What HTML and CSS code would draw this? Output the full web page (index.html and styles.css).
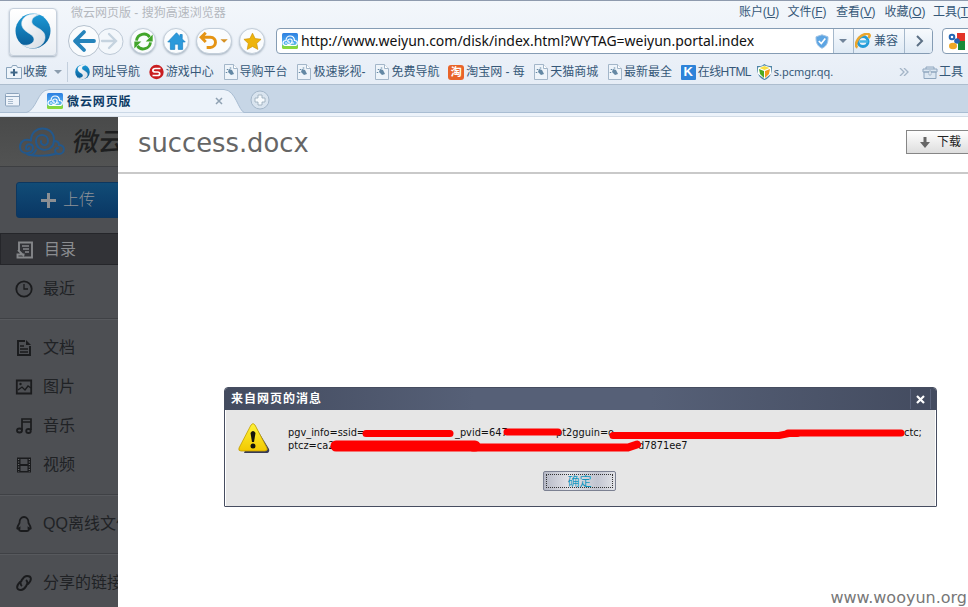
FILE: index.html
```html
<!DOCTYPE html>
<html lang="zh-CN">
<head>
<meta charset="utf-8">
<title>微云网页版</title>
<link rel="stylesheet" href="styles.css">
</head>
<body>
<svg class="defs" aria-hidden="true">
  <defs>
    <linearGradient id="blue" x1="0" y1="0" x2="0" y2="1"><stop offset="0" stop-color="#1c9bd8"/><stop offset="1" stop-color="#095a94"/></linearGradient>
    <linearGradient id="silver" x1="0" y1="0" x2="1" y2="1"><stop offset="0" stop-color="#fff"/><stop offset="1" stop-color="#d5dce4"/></linearGradient>
    <linearGradient id="warn" x1="0" y1="0" x2="0" y2="1"><stop offset="0" stop-color="#fff43a"/><stop offset="1" stop-color="#f2c800"/></linearGradient>
    <linearGradient id="sky" x1="0" y1="0" x2="0" y2="1"><stop offset="0" stop-color="#2d7fe0"/><stop offset=".7" stop-color="#58b5f3"/><stop offset=".8" stop-color="#7bd24c"/><stop offset="1" stop-color="#8ddb35"/></linearGradient>
    <symbol id="sogou" viewBox="0 0 36 36">
      <circle cx="18" cy="18" r="17.500" fill="url(#blue)"/>
      <path d="M25 1.500C13-1 5 5 7 13c2 7 13 8 12 14-1 4-6 6-12 5 9 6 22 3 23-7 1-9-11-10-13-15-1-5 3-7 8-8.500z" fill="url(#silver)" stroke="#d9e5ee" stroke-width=".6"/>
    </symbol>
    <symbol id="file" viewBox="0 0 15 16">
      <path d="M1.500.5h9l4 4v11h-13z" fill="#eef4fa" stroke="#a3b6c9"/><path d="M10.500 .5v4h4" fill="#fff" stroke="#a3b6c9"/>
      <path d="M6 5l3 1 2 4-3 1-3-3z" fill="#6488a4"/><path d="M4.500 5v1M7.500 3.500v1M3.500 8v1" stroke="#6488a4" stroke-width="1.500"/>
    </symbol>
    <symbol id="cloud" viewBox="0 0 46 30">
      <g fill="none" stroke="currentColor" stroke-linecap="round">
        <path d="M12 13.500C12 -2.500 35 -2.500 35 13c0 13-18 13-18 1 0-8 12-8 12 0 0 6-8 5-7 0"/>
        <path d="M12 13.500C4 11 1 16 1 20c0 8 13 8 13 1 0-5-7-5-7 0 0 2 3 2 3 0"/>
        <path d="M35 14c4 0 5 2 5 4 7 0 6 9 0 9-5 0-5-6-1-6"/>
        <path d="M8 27c4 3 8-1 9-4M11 28c5 1 18 1 25-1"/>
      </g>
    </symbol>
    <symbol id="weiyun" viewBox="0 0 16 16">
      <rect width="16" height="16" rx="1.500" fill="url(#sky)"/>
      <g fill="none" stroke="#fff" stroke-width="1.200"><path d="M4 12.500c-4 0-4-5 0-5 0-6 8-6 8.500 0 4 0 3.500 5 0 5z"/><path d="M5 11c5 2 7-5 3-5-3 0-3 4 0 3M12 10h-2M3 10h2"/></g>
    </symbol>
  </defs>
</svg>

<header class="chrome">
  <div class="top">
    <div class="brand"><svg><use href="#sogou"/></svg></div>
    <div class="bars">
      <div class="titlebar">
        <span class="wintitle">微云网页版 - 搜狗高速浏览器</span>
        <nav class="menu"><span>账户(<u>U</u>)</span><span>文件(<u>F</u>)</span><span>查看(<u>V</u>)</span><span>收藏(<u>O</u>)</span><span>工具(<u>T</u></span></nav>
      </div>
      <div class="toolbar">
        <svg class="backfwd" viewBox="0 0 58 34">
          <circle cx="43" cy="17.500" r="13" fill="#f3f7fb" stroke="#bdc9d6"/>
          <circle cx="17" cy="17" r="15.500" fill="#f9fbfd" stroke="#b5c1ce"/>
          <path d="M17 8l-9 9 9 9M9 17h18" fill="none" stroke="#2583bb" stroke-width="3.800" stroke-linecap="round" stroke-linejoin="round"/>
          <path d="M42 10l7 7-7 7M48 17H35" fill="none" stroke="#c5d3df" stroke-width="2.300" stroke-linecap="round"/>
        </svg>
        <div class="round"><svg viewBox="0 0 24 24"><path d="M4 11c1-8 11-10 15-4M20 13c-1 8-11 10-15 4" fill="none" stroke="#42a52b" stroke-width="3.200"/><path d="M22.500 4v8h-8zM1.500 20v-8h8z" fill="#42a52b"/></svg></div>
        <div class="round"><svg viewBox="0 0 24 24"><path d="M12 2L2 12.500h3V21h5v-6h4v6h5v-8.500h3L18.500 9V4H16v2.500z" fill="#2c9adb" stroke="#1780c3" stroke-width=".8"/></svg></div>
        <div class="round undo"><svg viewBox="0 0 34 24"><path d="M8 3L3 8l5 5M4 8h9c8 0 7 11 0 11H9" fill="none" stroke="#e59414" stroke-width="3.200"/><path d="M24 10h8l-4 4z" fill="#d59022"/></svg></div>
        <div class="round"><svg viewBox="0 0 24 24"><path d="M12 2.500l3 6.200 6.800.8-5 4.700 1.300 6.800-6.100-3.300L6 21l1.200-6.800-5-4.700 6.800-.8z" fill="#eeb40b" stroke="#cf9308" stroke-width=".8"/></svg></div>
        <div class="address">
          <svg class="favicon"><use href="#weiyun"/></svg>
          <span class="url">http://www.weiyun.com/disk/index.html?WYTAG=weiyun.portal.index</span>
          <svg class="shield" viewBox="0 0 14 15"><path d="M7 .8l6 2c.3 6-1.500 9.500-6 11.500C2.500 12.300.7 8.800 1 2.800z" fill="#5da5e3" stroke="#a3c5e5"/><path d="M3.800 7l2.500 2.500 4-5" fill="none" stroke="#fff" stroke-width="1.700"/></svg>
          <div class="cell drop"><i></i></div>
          <div class="cell compat"><svg viewBox="0 0 16 16"><circle cx="8" cy="8.500" r="5" fill="none" stroke="#239bd7" stroke-width="3"/><path d="M5 8.500h8" stroke="#46b5e4" stroke-width="2.500"/><path d="M2.500 14.500C-1 13 2 4 9 1.500 14-.3 16 2 13.500 5" fill="none" stroke="#eaa62d" stroke-width="2.600"/></svg><span>兼容</span></div>
          <div class="cell go"><svg viewBox="0 0 10 12"><path d="M2 1l5 5-5 5" fill="none" stroke="#5c7085" stroke-width="2"/></svg></div>
        </div>
        <div class="search"><svg viewBox="0 0 17 17"><rect width="17" height="17" rx="2" fill="#fff"/><path d="M9 0h8v8H9z" fill="#e33428"/><path d="M10 8h7v9h-7z" fill="#198b3a"/><circle cx="4" cy="4" r="2.300" fill="none" stroke="#2465b3" stroke-width="2"/><circle cx="9" cy="8" r="2.800" fill="#2465b3"/><ellipse cx="5" cy="13" rx="4" ry="3.300" fill="#eda826"/></svg></div>
      </div>
    </div>
  </div>
  <div class="bookmarks">
    <div class="fav"><svg viewBox="0 0 16 14"><path d="M.5 2.500h5l1-2h4l1 2h4v11H.5z" fill="#eef4fa" stroke="#8ba4bc"/><path d="M8 4v7M4.500 7.500h7" stroke="#3f6687" stroke-width="2"/></svg><span>收藏</span><i></i></div>
    <div class="marks">
      <div class="bm"><svg><use href="#sogou"/></svg><span>网址导航</span></div>
      <div class="bm"><svg viewBox="0 0 15 15"><circle cx="7.500" cy="7.500" r="7.200" fill="#c91d20"/><path d="M11.500 4H6.500C3 4 3 7.500 6.500 7.500h2c3 0 3 3.500 0 3.500H3.500" fill="none" stroke="#fff" stroke-width="1.700"/></svg><span>游戏中心</span></div>
      <div class="bm"><svg><use href="#file"/></svg><span>导购平台</span></div>
      <div class="bm"><svg><use href="#file"/></svg><span>极速影视-</span></div>
      <div class="bm"><svg><use href="#file"/></svg><span>免费导航</span></div>
      <div class="bm"><b class="tao">淘</b><span>淘宝网 - 每</span></div>
      <div class="bm"><svg><use href="#file"/></svg><span>天猫商城</span></div>
      <div class="bm"><svg><use href="#file"/></svg><span>最新最全</span></div>
      <div class="bm"><b class="k">K</b><span>在线HTML</span></div>
      <div class="bm"><svg viewBox="0 0 15 16"><path d="M7.500 0C10 2 12 2 15 2c0 8-2 12-7.500 14C2 14 0 10 0 2c3 0 5 0 7.500-2z" fill="#4b83a5"/><path d="M7.500 1.500L14 3.500V10l-6.500 5L1 10V3.500z" fill="#fff"/><path d="M2 5l5 2v7L3 10z" fill="#4ca920"/><path d="M13 5L8 7v7l4-4z" fill="#f19a1c"/><path d="M2.500 4l5-2 5 2-5 2z" fill="#f9df41"/></svg><span>s.pcmgr.qq.</span></div>
    </div>
    <div class="tools"><svg class="more" viewBox="0 0 10 8"><path d="M1 0l4 4-4 4M5 0l4 4-4 4" fill="none" stroke="#a4b5c7" stroke-width="1.300"/></svg><svg class="box" viewBox="0 0 16 13"><path d="M4 3V1h8v2M1 3h14v3H1zM2 6h12v6.500H2z" fill="#dce7f2" stroke="#8fa6be"/><path d="M7 5h2v4H7z" fill="#fff" stroke="#8fa6be" stroke-width=".7"/></svg><span>工具</span></div>
  </div>
</header>

<div class="tabs">
  <svg class="sidebtn" viewBox="0 0 16 14"><rect x=".5" y=".5" width="14" height="12.500" rx="1" fill="#edf3fa" stroke="#8ca3bc"/><path d="M1 3.500h13" stroke="#8ca3bc"/><path d="M3 6.500h5M3 8.500h5M3 10.500h5" stroke="#a8bacd"/></svg>
  <div class="tab">
    <svg class="tabshape" viewBox="0 0 220 24" preserveAspectRatio="none"><path d="M0 24C12 22 12 1 24 .5h175C211 1 213 22 220 24z" fill="#edf3fa" stroke="#a9bdd2"/></svg>
    <div class="tabbody"><svg><use href="#weiyun"/></svg><b>微云网页版</b><svg class="x" viewBox="0 0 8 8"><path d="M1 1l6 6M7 1L1 7" stroke="#8fa1b2" stroke-width="1.500"/></svg></div>
  </div>
  <svg class="plus" viewBox="0 0 20 20"><circle cx="10" cy="10" r="9" fill="#d9e4ef" stroke="#a4b7ca"/><path d="M8 5h4v3h3v4h-3v3H8v-3H5V8h3z" fill="#f6fafd" stroke="#98a8b8" stroke-width=".8"/></svg>
</div>

<main class="page">
  <aside class="side">
    <div class="logo"><svg><use href="#cloud"/></svg><span>微云</span></div>
    <div class="upload"><svg viewBox="0 0 15 15"><path d="M7.500 0v15M0 7.500h15" stroke="#8c8f93" stroke-width="3"/></svg><span>上传</span></div>
    <ul class="nav first">
      <li class="on"><svg viewBox="0 0 18 18"><path d="M3 10V1.500h13v15H1.500v-3h7M2 9l6 6" fill="none" stroke="#85878a" stroke-width="1.900"/><path d="M6 5h7M7 8h6M9 11h4" stroke="#85878a" stroke-width="1.500"/></svg><span>目录</span></li>
      <li><svg viewBox="0 0 18 18"><circle cx="9" cy="9" r="7.700" fill="none" stroke="#1a1b1d" stroke-width="1.800"/><path d="M9 4v5h4" fill="none" stroke="#1a1b1d" stroke-width="1.300"/></svg><span>最近</span></li>
    </ul>
    <ul class="nav media">
      <li><svg viewBox="0 0 18 18"><path d="M10 2H3v14h12V7" fill="none" stroke="#1a1b1d" stroke-width="1.900"/><path d="M11 1l5 5h-5z" fill="#1a1b1d"/><path d="M5 7h4M5 10h8M5 13h8" stroke="#1a1b1d" stroke-width="1.300"/></svg><span>文档</span></li>
      <li><svg viewBox="0 0 18 18"><path d="M1.800 2.500h14.400v13H1.800z" fill="none" stroke="#1a1b1d" stroke-width="1.800"/><path d="M3 12l4-3 3 3 3-4 3 2" fill="none" stroke="#1a1b1d" stroke-width="1.300"/><circle cx="5.500" cy="6" r="1.200" fill="#1a1b1d"/></svg><span>图片</span></li>
      <li><svg viewBox="0 0 18 18"><path d="M7 13V2h9v11M7 5h9" fill="none" stroke="#1a1b1d" stroke-width="1.700"/><ellipse cx="4.500" cy="13.500" rx="2.500" ry="2" fill="none" stroke="#1a1b1d" stroke-width="1.800"/><ellipse cx="13.500" cy="14" rx="2.300" ry="2" fill="none" stroke="#1a1b1d" stroke-width="1.800"/></svg><span>音乐</span></li>
      <li><svg viewBox="0 0 18 18"><path d="M2 1.500h14v15H2z" fill="#1a1b1d"/><path d="M5.500 3h7v5h-7zM5.500 10h7v5h-7z" fill="#4d4f53"/><path d="M3.700 3v13M14.300 3v13" stroke="#77797c" stroke-dasharray="1 1.500"/></svg><span>视频</span></li>
    </ul>
    <ul class="nav tall">
      <li><svg viewBox="0 0 18 18"><path d="M4.500 8C4 0 14 0 13.500 8c3 5 3 7 0 5 0 2 1 3-1.500 3H6c-2.500 0-1.500-1-1.500-3-3 2-3 0 0-5z" fill="none" stroke="#1a1b1d" stroke-width="1.800"/></svg><span>QQ离线文件</span></li>
    </ul>
    <ul class="nav tall">
      <li><svg viewBox="0 0 18 18"><path d="M7 12C3 9 9 2 12 2c5 0 5 4 1 8l-2 1M11 6c4 3-2 10-5 10-5 0-5-4-1-8l2-1" fill="none" stroke="#1a1b1d" stroke-width="1.900"/></svg><span>分享的链接</span></li>
    </ul>
  </aside>
  <section class="preview">
    <div class="dochead"><h1>success.docx</h1><div class="download"><svg viewBox="0 0 10 11"><path d="M3.500 0h3v5H10l-5 6-5-6h3.500z" fill="#666"/></svg><span>下载</span></div></div>
    <div class="docbody"></div>
    <div class="watermark">www.wooyun.org</div>
  </section>
  <div class="dialog">
    <div class="dtitle"><b>来自网页的消息</b><span class="close"><svg viewBox="0 0 9 9"><path d="M1 1l7 7M8 1L1 8" stroke="#fff" stroke-width="2.200"/></svg></span></div>
    <div class="dbody">
      <svg class="warning" viewBox="0 0 32 32"><path d="M17 4L31 27q1 4-3 4H6z" fill="#363a56"/><path d="M13 3q2-3 4 0l12 23q1 3-2 3H3q-3 0-2-3z" fill="url(#warn)" stroke="#c19d00" stroke-width=".8"/><path d="M12.500 11q2.500-4 5 0L16 20h-2z" fill="#14130c"/><circle cx="15" cy="24" r="2.500" fill="#14130c"/></svg>
      <div class="message">
        <p><span class="s1">pgv_info=ssid=</span><span class="s2">_pvid=647</span><span class="s3">pt2gguin=o</span><span class="s4">ctc;</span></p>
        <p><span class="s1">ptcz=ca2</span><span class="s5">d7871ee7</span></p>
        <svg class="strokes" viewBox="0 0 650 40"><g fill="none" stroke="#f00" stroke-linecap="round" stroke-linejoin="round"><path d="M78 13.500h84" stroke-width="7"/><path d="M219 12h51" stroke-width="7"/><path d="M325 15.500h166l10-2h8" stroke-width="7"/><path d="M500 13h113" stroke-width="7"/><path d="M48 26h139" stroke-width="11"/><path d="M185 27.500h155l9-3" stroke-width="8"/></g></svg>
      </div>
    </div>
    <div class="dfoot"><span class="ok">确定</span></div>
  </div>
</main>
</body>
</html>
```
FILE: styles.css
```css
* { box-sizing: border-box; }
body { margin: 0; width: 968px; height: 607px; overflow: hidden; display: flex; flex-direction: column; background: #fff; font: 12px/16px "Liberation Sans", "Noto Sans CJK SC", sans-serif; color: #365878; white-space: nowrap; }
svg { display: block; flex: none; }
ul, p, h1 { margin: 0; padding: 0; list-style: none; font-weight: normal; }
.defs { position: absolute; width: 0; height: 0; }

.chrome { height: 85px; flex: none; background: linear-gradient(#f3f7fb, #edf2f9 50%, #e6edf6); border-top: 1px solid #8f9bae; border-bottom: 1px solid #adbdce; }
.top { display: flex; height: 57px; }
.brand { width: 48px; height: 48px; margin: 7px 10px 0 9px; padding: 4px 5px; flex: none; border: 1px solid #c6d0dc; border-radius: 4px; background: linear-gradient(#fff, #e9eef4); box-shadow: 0 1px 2px #9eacba; }
.brand svg { width: 36px; height: 36px; }
.bars { width: 901px; overflow: hidden; }
.titlebar { display: flex; height: 23px; align-items: center; }
.wintitle { width: 672px; flex: none; padding-left: 4px; color: #b4b8be; font-size: 12px; }
.menu { display: flex; font-size: 12px; letter-spacing: -.1px; margin-top: -2px; }
.menu span { flex: none; width: 48.500px; }
.toolbar { display: flex; height: 34px; align-items: center; }
.backfwd { width: 58px; height: 34px; margin-right: 5px; }
.round { width: 26px; height: 26px; margin-right: 7px; flex: none; display: flex; align-items: center; justify-content: center; border: 1px solid #c3ceda; border-radius: 13px; background: #fafcfe; box-shadow: 0 1px 2px #aab7c4; }
.round svg { width: 21px; height: 21px; }
.round.undo { width: 36px; }
.round.undo svg { width: 32px; height: 22px; }
.address { width: 657px; height: 26px; margin: 0 9px 0 4px; flex: none; display: flex; align-items: center; border: 1px solid #859cb4; border-radius: 4px; background: #fff; overflow: hidden; }
.favicon { width: 16px; height: 16px; margin: 0 3px 0 5px; }
.url { width: 514px; color: #111; font: 13.970px/22px "Noto Sans", sans-serif; }
.shield { width: 14px; height: 15px; }
.cell { height: 24px; display: flex; align-items: center; border-left: 1px solid #a5b8cb; background: linear-gradient(#f7fafd, #dfeaf5); }
.drop { width: 20px; margin-left: 4px; padding-left: 5px; }
.drop i, .fav i { border: 4px solid transparent; border-top-color: #71849a; border-bottom: 0; }
.compat { width: 51px; padding-left: 1px; gap: 3px; }
.compat svg { width: 16px; height: 16px; }
.go { flex: 1; padding-left: 10px; }
.go svg { width: 10px; height: 12px; }
.search { width: 40px; height: 26px; padding: 4px 5px; flex: none; border: 1px solid #859cb4; border-radius: 4px; background: #fff; }
.search svg { width: 17px; height: 17px; }
.bookmarks { display: flex; height: 28px; align-items: center; }
.fav { width: 68px; height: 20px; padding-left: 6px; display: flex; align-items: center; border-right: 1px solid #c3cfdd; }
.fav svg { width: 16px; height: 14px; margin-right: 1px; }
.fav i { margin-left: 7px; border-top-color: #8c9dae; }
.marks { width: 831px; display: flex; padding-left: 7px; }
.bm { width: 73.800px; flex: none; display: flex; align-items: center; gap: 2px; }
.bm svg { width: 15px; height: 16px; }
.bm:nth-child(4) { width: 78px; }
.bm:nth-child(6) { width: 85px; }
.bm:nth-child(9) { width: 76px; letter-spacing: -.6px; }
.bm:nth-child(10) { width: 80px; font-family: "Noto Sans", sans-serif; font-size: 11px; }
.tao, .k { width: 16px; height: 15px; font-size: 11px; line-height: 14px; text-align: center; color: #fff; background: #e9642a; border-radius: 3px; letter-spacing: 0; }
.k { width: 15px; background: #2e83d9; border-radius: 1px; font-size: 13px; }
.tools { display: flex; align-items: center; }
.more { width: 10px; height: 8px; margin-right: 13px; }
.box { width: 16px; height: 13px; margin-right: 1px; }

.tabs { height: 32px; flex: none; display: flex; background: linear-gradient(#c7d6e6 27px, #a9bdd2 27px 28px, #edf3fa 28px 31px, #d3dce6 31px); padding-left: 5px; }
.sidebtn { width: 16px; height: 14px; margin-top: 8px; }
.tab { width: 220px; height: 28px; margin-left: 4px; padding-top: 4px; display: grid; }
.tabshape, .tabbody { grid-area: 1 / 1; width: 220px; height: 24px; }
.tabbody { display: flex; align-items: center; padding-left: 22px; color: #0c3b66; }
.tabbody svg { width: 16px; height: 16px; margin-right: 4px; }
.tabbody b { width: 148px; font-size: 12px; letter-spacing: .9px; padding-top: 1px; }
.tabbody svg.x { width: 8px; height: 8px; margin: 0; }
.plus { width: 20px; height: 20px; margin: 5px 0 0 5px; }

.page { height: 490px; display: flex; position: relative; }
.side { width: 118px; flex: none; overflow: hidden; background: #4d4f53; font-size: 16px; line-height: 24px; color: #202225; font-weight: 300; }
.logo { height: 50px; display: flex; align-items: center; padding-left: 19px; background: linear-gradient(#494a4a, #525353); border-bottom: 1px solid #3d3f42; color: #1e1f20; }
.logo svg { width: 46px; height: 30px; color: #23588c; stroke-width: 2; }
.logo span { flex: none; margin-left: 8px; font-size: 26px; font-weight: 500; transform: skewX(-10deg); }
.upload { width: 120px; height: 36px; margin: 15px 0 15px 16px; padding-left: 24px; display: flex; align-items: center; gap: 7px; border: 1px solid #0d375f; border-radius: 3px; background: linear-gradient(#114c77, #0a3764); color: #909398; }
.upload svg { width: 15px; height: 15px; }
.nav { border-bottom: 1px solid #3f4145; box-shadow: 0 1px #57595d; }
.nav li { height: 39px; display: flex; align-items: center; padding-left: 15px; }
.nav li svg { width: 18px; height: 18px; margin-right: 10px; }
.nav .on { height: 32px; margin-bottom: 4px; padding-left: 15px; background: #323337; border: solid #25262a; border-width: 1px 0 1px 1px; color: #8b8d90; padding-top: 2px; }
.first { height: 86px; }
.media { height: 176px; padding-top: 9px; }
.tall { height: 59px; padding-top: 9px; }

.preview { flex: 1; display: flex; flex-direction: column; background: #fff; }
.dochead { height: 57px; flex: none; display: flex; justify-content: space-between; border-bottom: 2px solid #c9c9c9; padding-left: 20px; }
h1 { color: #666; font: 25.800px/52px "DejaVu Sans", sans-serif; }
.download { width: 62px; height: 24px; margin-top: 13px; padding-left: 13px; display: flex; align-items: center; gap: 7px; border: 1px solid #868686; border-right: 0; background: linear-gradient(#fff, #dedede); color: #222; }
.download svg { width: 10px; height: 11px; }
.docbody { flex: 1; }
.watermark { padding-right: 1px; text-align: right; color: #777; font: 16px/19px "DejaVu Sans", sans-serif; }

.dialog { position: absolute; left: 224px; top: 270px; width: 713px; height: 120px; border: 1px solid #464d60; border-radius: 4px 4px 1px 1px; background: #e6e6e6; box-shadow: inset 1px 0 #fff, inset -1px 0 #fff; }
.dtitle { height: 22px; display: flex; align-items: center; justify-content: space-between; padding: 0 5px 0 6px; border-radius: 3px 3px 0 0; color: #fff; background: linear-gradient(90deg, #434b5f, #566077 35%, #566077 60%, #434b5f); }
.dtitle b { letter-spacing: 1px; }
.close { width: 21px; height: 20px; display: grid; place-items: center; border: solid #59627a; border-width: 0 1px; }
.close svg { width: 9px; height: 9px; }
.dbody { height: 61px; display: flex; padding: 12px 0 0 13px; }
.warning { width: 32px; height: 32px; margin-right: 18px; }
.message { width: 640px; position: relative; color: #111; font: 10.900px/13px "DejaVu Sans Condensed", "DejaVu Sans", sans-serif; padding-top: 4px; }
.message p { display: flex; }
.message span { flex: none; }
.message .s1 { width: 167px; }
.message .s2 { width: 101px; }
.message .s3 { width: 348px; }
.message .s5 { margin-left: 183px; }
.strokes { position: absolute; left: 0; top: -2px; width: 650px; height: 40px; }
.dfoot { display: flex; justify-content: center; padding-right: 2px; }
.ok { width: 73px; height: 20px; text-align: center; color: #1497bd; border: 1px solid #7b8091; border-radius: 2px; outline: 1px dotted #333; outline-offset: -4px; background: linear-gradient(90deg, #b5b8c5, #e3e4e9 35%, #c2c5d1 75%, #e2e3e7); line-height: 20px; }
```
